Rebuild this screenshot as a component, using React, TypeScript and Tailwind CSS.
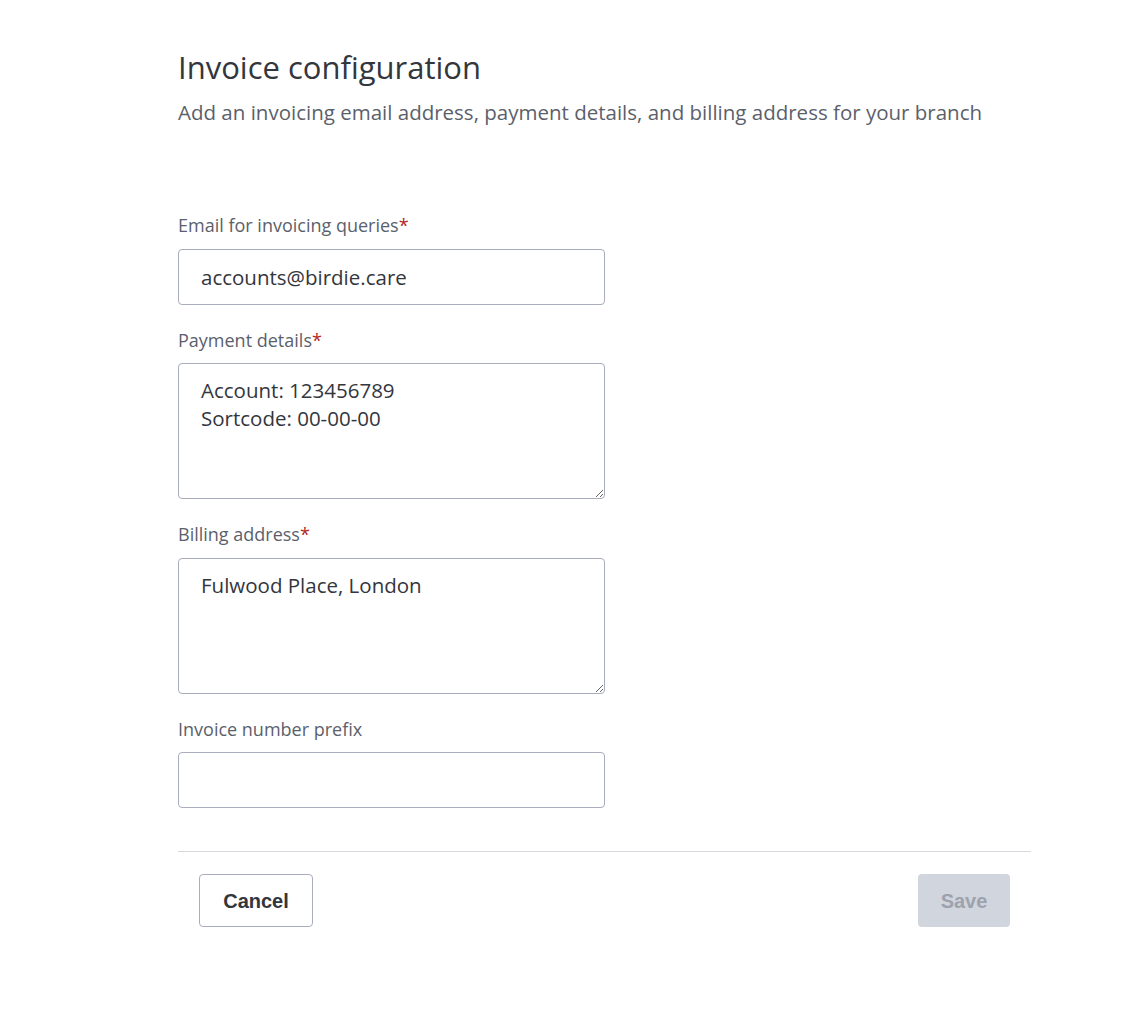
import React from "react";

export default function App() {
  const font = { fontFamily: "'Open Sans', 'Noto Sans', sans-serif" };
  return (
    <div className="min-h-[1034px] w-full bg-white text-[#33363d]" style={font}>
      <div className="ml-[178px] w-[853px] pt-[47px]">
        <h1 className="text-[31px] leading-[40px] text-[#33363d]">Invoice configuration</h1>
        <p className="mt-[11px] text-[20.5px] leading-[28px] text-[#5b5f6b]">
          Add an invoicing email address, payment details, and billing address for your branch
        </p>

        <div className="mt-[87px] flex flex-col">
          <label className="text-[18px] leading-[24px] text-[#5b5f6b]">
            Email for invoicing queries<span className="text-[#b3261e]">*</span>
          </label>
          <input
            readOnly
            value="accounts@birdie.care"
            className="mt-[12px] h-[56px] w-[427px] rounded-[4px] border border-[#a9acbc] px-[22px] text-[20.5px] text-[#33363d] outline-none"
          />

          <label className="mt-[23px] text-[18px] leading-[24px] text-[#5b5f6b]">
            Payment details<span className="text-[#b3261e]">*</span>
          </label>
          <textarea
            readOnly
            value={"Account: 123456789\nSortcode: 00-00-00"}
            className="mt-[11px] h-[136px] w-[427px] rounded-[4px] border border-[#a9acbc] px-[22px] py-[12px] text-[20.5px] leading-[28px] text-[#33363d] outline-none"
          />

          <label className="mt-[23px] text-[18px] leading-[24px] text-[#5b5f6b]">
            Billing address<span className="text-[#b3261e]">*</span>
          </label>
          <textarea
            readOnly
            value={"Fulwood Place, London"}
            className="mt-[12px] h-[136px] w-[427px] rounded-[4px] border border-[#a9acbc] px-[22px] py-[12px] text-[20.5px] leading-[28px] text-[#33363d] outline-none"
          />

          <label className="mt-[23px] text-[18px] leading-[24px] text-[#5b5f6b]">
            Invoice number prefix
          </label>
          <input
            readOnly
            value=""
            className="mt-[11px] h-[56px] w-[427px] rounded-[4px] border border-[#a9acbc] px-[22px] text-[20.5px] outline-none"
          />
        </div>

        <div className="mt-[43px] border-t border-[#d6d8de] px-[21px] pt-[22px]">
          <div className="flex items-center justify-between" style={{ fontFamily: "'Liberation Sans', Arial, sans-serif" }}>
            <button className="h-[53px] w-[114px] rounded-[4px] border border-[#a9acbc] bg-white text-[20px] font-semibold text-[#33363d]">
              Cancel
            </button>
            <button className="h-[53px] w-[92px] rounded-[4px] bg-[#d1d5dd] text-[20px] font-semibold text-[#9da2ad]">
              Save
            </button>
          </div>
        </div>
      </div>
    </div>
  );
}
